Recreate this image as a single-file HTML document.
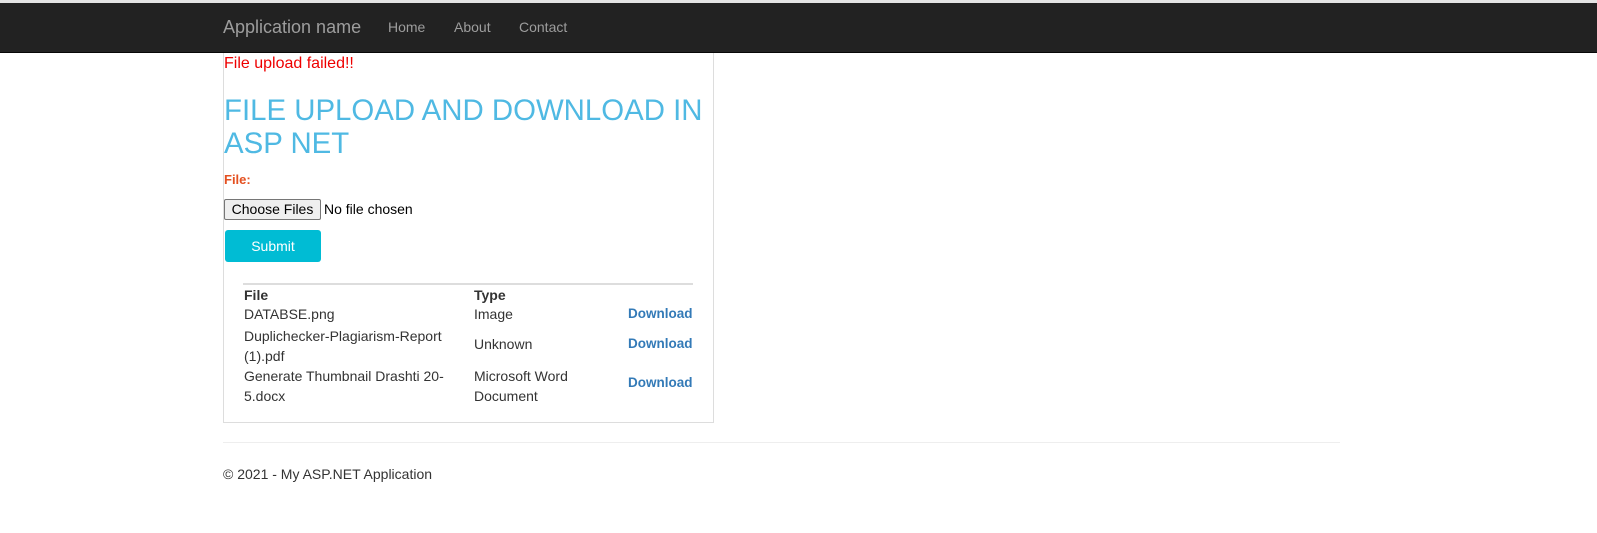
<!DOCTYPE html>
<html><head><meta charset="utf-8"><style>
*{margin:0;padding:0;box-sizing:border-box}
body{width:1597px;height:533px;background:#fff;font-family:"Liberation Sans",Arial,sans-serif;font-size:14px;color:#333;position:relative;overflow:hidden}
.top{position:absolute;left:0;top:0;width:1597px;height:3px;background:#e4e4e4}
.nav{position:absolute;left:0;top:3px;width:1597px;height:50px;background:#222;border-bottom:1px solid #080808}
.a{position:absolute;top:0;line-height:48px;color:#9d9d9d}
.box{position:absolute;left:223px;top:53px;width:491px;height:370px;border:1px solid #ddd;border-top:none}
.t{position:absolute;white-space:nowrap}
.dl{color:#337ab7;font-weight:bold;font-size:13.5px}
</style></head><body>
<div class="top"></div>
<div class="nav">
<span class="a" style="left:223px;font-size:18px">Application name</span>
<span class="a" style="left:388px">Home</span>
<span class="a" style="left:454px">About</span>
<span class="a" style="left:519px">Contact</span>
</div>
<div class="box"></div>
<div class="t" style="left:224px;top:55px;color:#e00;font-size:16px">File upload failed!!</div>
<div class="t" style="left:224px;top:94px;color:#4fb9e3;font-size:29.4px;line-height:33px">FILE UPLOAD AND DOWNLOAD IN<br>ASP NET</div>
<div class="t" style="left:224px;top:172px;color:#e45020;font-weight:bold;font-size:13px">File:</div>
<div class="t" style="left:224px;top:199px;width:97px;height:21px;border:1px solid #767676;border-radius:2px;background:#efefef;color:#000;font-size:14px;line-height:19px;text-align:center">Choose Files</div>
<div class="t" style="left:324px;top:201px;color:#000">No file chosen</div>
<div class="t" style="left:225px;top:230px;width:96px;height:32px;background:#00bcd4;border-radius:3px;color:#fff;text-align:center;line-height:32px;font-size:14px">Submit</div>
<div class="t" style="left:243px;top:283px;width:450px;height:2px;background:#ddd"></div>
<div class="t" style="left:244px;top:287px;font-weight:bold">File</div>
<div class="t" style="left:474px;top:287px;font-weight:bold">Type</div>
<div class="t" style="left:244px;top:306px">DATABSE.png</div>
<div class="t" style="left:474px;top:306px">Image</div>
<div class="t dl" style="left:628px;top:306px">Download</div>
<div class="t" style="left:244px;top:326px;line-height:20px">Duplichecker-Plagiarism-Report<br>(1).pdf</div>
<div class="t" style="left:474px;top:336px">Unknown</div>
<div class="t dl" style="left:628px;top:336px">Download</div>
<div class="t" style="left:244px;top:366px;line-height:20px">Generate Thumbnail Drashti 20-<br>5.docx</div>
<div class="t" style="left:474px;top:366px;line-height:20px">Microsoft Word<br>Document</div>
<div class="t dl" style="left:628px;top:375px">Download</div>
<div class="t" style="left:223px;top:442px;width:1117px;height:1px;background:#eee"></div>
<div class="t" style="left:223px;top:466px">© 2021 - My ASP.NET Application</div>
</body></html>
